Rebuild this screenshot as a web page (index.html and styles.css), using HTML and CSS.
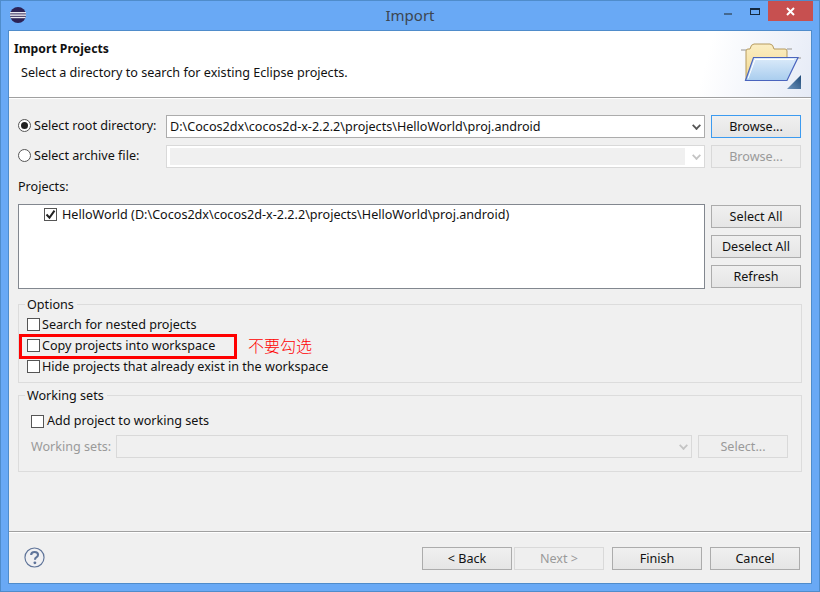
FILE: index.html
```html
<!DOCTYPE html>
<html lang="en">
<head>
  <meta charset="UTF-8">
  <title>Import</title>
  <link rel="stylesheet" href="styles.css">
</head>
<body>
<div class="window">
  <div class="titlebar">
    <svg class="appicon" width="16" height="16" viewBox="0 0 16 16">
      <circle cx="8" cy="8" r="8" fill="#2c2255"/>
      <rect x="0" y="5" width="16" height="1.4" fill="#e8e8f0"/>
      <rect x="0" y="7.4" width="16" height="1.4" fill="#f4f4f8"/>
      <rect x="0.4" y="9.8" width="15.2" height="1.4" fill="#e8e8f0"/>
    </svg>
    <div class="title">Import</div>
    <div class="winbtn minbtn"></div>
    <div class="winbtn maxbtn"></div>
    <div class="closebtn">
      <svg width="9" height="9" viewBox="0 0 9 9"><path d="M1 1l7 7M8 1l-7 7" stroke="#fff" stroke-width="2"/></svg>
    </div>
  </div>

  <div class="client">
    <div class="banner">
      <div class="banner-text">
        <div class="banner-title">Import Projects</div>
        <div class="banner-desc">Select a directory to search for existing Eclipse projects.</div>
      </div>
      <svg class="folder" width="62" height="50" viewBox="0 0 62 50">
        <defs>
          <linearGradient id="back" x1="0" y1="0" x2="0" y2="1"><stop offset="0" stop-color="#fbeec4"/><stop offset="1" stop-color="#f3d98f"/></linearGradient>
          <linearGradient id="front" x1="0" y1="0" x2="0" y2="1"><stop offset="0" stop-color="#dcebfa"/><stop offset="1" stop-color="#a9cdee"/></linearGradient>
          <linearGradient id="corner" x1="0" y1="1" x2="1" y2="0"><stop offset="0" stop-color="#6f95bd"/><stop offset="1" stop-color="#1f4a78"/></linearGradient>
        </defs>
        <path d="M1 8h5M47 7h5M12 16h3M55 16h6" stroke="#b5b5b5" stroke-width="1.5"/>
        <path d="M6 38V9q0-2 2-2h2q1-5 4-5h16q3 0 4 5h11q2 0 2 2v10H14z" fill="url(#back)" stroke="#b59a5e"/>
        <path d="M5.500 38.500L13.500 15.500H58L47 38.500z" fill="url(#front)" stroke="#4a64bd" stroke-width="1.2"/>
        <path d="M8 36.500L15 17.500h39" fill="none" stroke="#fff"/>
        <path d="M47 47l14-14v14z" fill="url(#corner)"/>
      </svg>
    </div>

    <div class="content">
      <div class="row">
        <label class="choice root-choice"><span class="radio on"></span>Select root directory:</label>
        <div class="combo"><span class="combo-text">D:\Cocos2dx\cocos2d-x-2.2.2\projects\HelloWorld\proj.android</span><span class="chev"></span></div>
        <button class="btn focus">Browse...</button>
      </div>
      <div class="row row-archive">
        <label class="choice root-choice"><span class="radio"></span>Select archive file:</label>
        <div class="combo off"><span class="combo-fill"></span><span class="chev"></span></div>
        <button class="btn off">Browse...</button>
      </div>

      <div class="projects-label">Projects:</div>
      <div class="projects">
        <div class="list">
          <div class="list-item"><span class="check on"><svg width="11" height="11" viewBox="0 0 11 11"><path d="M1.5 5.5l3 3.2 5-7" fill="none" stroke="#222" stroke-width="2"/></svg></span>HelloWorld (D:\Cocos2dx\cocos2d-x-2.2.2\projects\HelloWorld\proj.android)</div>
        </div>
        <div class="side-btns">
          <button class="btn">Select All</button>
          <button class="btn">Deselect All</button>
          <button class="btn">Refresh</button>
        </div>
      </div>

      <div class="group options">
        <div class="legend">Options</div>
        <label class="choice opt"><span class="check"></span>Search for nested projects</label>
        <label class="choice opt"><span class="check"></span>Copy projects into workspace</label>
        <label class="choice opt"><span class="check"></span>Hide projects that already exist in the workspace</label>
        <div class="redbox"></div>
        <div class="note">不要勾选</div>
      </div>

      <div class="group sets">
        <div class="legend">Working sets</div>
        <label class="choice add"><span class="check"></span>Add project to working sets</label>
        <div class="row sets-row">
          <span class="muted">Working sets:</span>
          <div class="combo off"><span class="chev"></span></div>
          <button class="btn off">Select...</button>
        </div>
      </div>
    </div>

    <div class="footer">
      <svg class="help" width="21" height="21" viewBox="0 0 22 22">
        <circle cx="11" cy="11" r="10" fill="#f0f0f2" stroke="#5f7499" stroke-width="1.2"/>
        <path d="M7.500 8.500q0-3.300 3.600-3.300 3.600 0 3.600 3 0 1.700-1.800 2.700-1.400.8-1.400 2.400" fill="none" stroke="#5f7499" stroke-width="2.200"/>
        <circle cx="11.400" cy="16.600" r="1.500" fill="#5f7499"/>
      </svg>
      <div class="footer-btns">
        <button class="btn">&lt; Back</button>
        <button class="btn off">Next &gt;</button>
        <button class="btn finish">Finish</button>
        <button class="btn cancel">Cancel</button>
      </div>
    </div>
  </div>
</div>
</body>
</html>
```

FILE: styles.css
```css
html, body {
  margin: 0;
  padding: 0;
}
body {
  width: 820px;
  height: 592px;
  overflow: hidden;
  font-family: "Noto Sans", "Noto Sans CJK SC", sans-serif;
  font-size: 12.6px;
  color: #111;
}
.window {
  box-sizing: border-box;
  width: 820px;
  height: 592px;
  background: #69a9f5;
  border: 1px solid #4f8ccb;
  padding: 0 7px 7px;
  display: flex;
  flex-direction: column;
}
.titlebar {
  height: 29px;
  flex: none;
  display: flex;
  align-items: flex-start;
  position: relative;
}
.appicon {
  margin: 6px 0 0 2px;
}
.title {
  position: absolute;
  left: 0;
  right: 0;
  top: 4px;
  text-align: center;
  font-size: 15px;
  line-height: 20px;
  color: #3c4650;
}
.winbtn {
  position: absolute;
  box-sizing: border-box;
}
.minbtn {
  right: 80px;
  top: 12px;
  width: 8px;
  height: 2px;
  background: #44688f;
}
.maxbtn {
  right: 52px;
  top: 7px;
  width: 10px;
  height: 7px;
  border: 1px solid #14293f;
  border-top-width: 2px;
}
.closebtn {
  position: absolute;
  right: -1px;
  top: 0;
  width: 45px;
  height: 20px;
  background: #c75050;
  display: flex;
  align-items: center;
  justify-content: center;
}
.client {
  flex: 1;
  background: #f0f0f0;
  border: 1px solid #4f8ccb;
  display: flex;
  flex-direction: column;
}
.banner {
  height: 66px;
  flex: none;
  background: linear-gradient(105deg, #fff 86%, #e6ebf6 100%);
  border-bottom: 1px solid #a0a0a0;
  box-shadow: 0 1px 0 #fff;
  display: flex;
  justify-content: space-between;
}
.banner-text {
  padding: 9px 0 0 5px;
}
.banner-title {
  font-weight: bold;
  font-size: 12.2px;
  line-height: 18px;
}
.banner-desc {
  margin: 6px 0 0 7px;
  line-height: 18px;
}
.folder {
  margin: 11px 9px 0 0;
}
.content {
  flex: 1;
  padding: 17px 10px 0 9px;
}
.row {
  display: flex;
  align-items: center;
}
.row-archive {
  margin-top: 7px;
}
.choice {
  display: flex;
  align-items: center;
  line-height: 18px;
}
.root-choice {
  width: 148px;
  flex: none;
  padding-bottom: 2px;
  box-sizing: border-box;
  white-space: nowrap;
}
.radio {
  box-sizing: border-box;
  width: 13px;
  height: 13px;
  border: 1px solid #555;
  border-radius: 50%;
  background: #fff;
  margin-right: 3px;
  flex: none;
  position: relative;
}
.radio.on::after {
  content: "";
  position: absolute;
  left: 2px;
  top: 2px;
  width: 7px;
  height: 7px;
  border-radius: 50%;
  background: #222;
}
.combo {
  box-sizing: border-box;
  flex: 1;
  height: 23px;
  background: #fff;
  border: 1px solid #acacac;
  display: flex;
  align-items: center;
  padding: 0 3px;
  position: relative;
  min-width: 0;
}
.combo-text {
  flex: 1;
  white-space: nowrap;
}
.combo.off {
  border-color: #d9d9d9;
  background: #f0f0f0;
}
.row-archive .combo {
  background: #fff;
}
.combo-fill {
  flex: 1;
  height: 17px;
  margin-right: 16px;
  background: #f0f0f0;
}
.chev {
  position: absolute;
  right: 4px;
  top: 6px;
  width: 5px;
  height: 5px;
  border-right: 2px solid #555;
  border-bottom: 2px solid #555;
  transform: rotate(45deg) scale(0.9);
}
.combo.off .chev {
  border-color: #c4c4c4;
}
.btn {
  box-sizing: border-box;
  width: 90px;
  height: 23px;
  flex: none;
  margin-left: 6px;
  padding: 0;
  font: inherit;
  color: #111;
  background: linear-gradient(#f0f0f0, #e5e5e5);
  border: 1px solid #acacac;
}
.btn.focus {
  border-color: #3c9bf0;
}
.btn.off {
  background: #efefef;
  border-color: #d9d9d9;
  color: #9a9a9a;
}
.projects-label {
  margin-top: 10px;
  line-height: 18px;
}
.projects {
  display: flex;
  margin-top: 8px;
}
.list {
  box-sizing: border-box;
  flex: 1;
  height: 85px;
  background: #fff;
  border: 1px solid #82878f;
  padding: 1px 0 0 25px;
}
.list-item {
  display: flex;
  align-items: center;
  line-height: 17px;
  white-space: nowrap;
}
.list-item .check {
  margin-right: 5px;
}
.check {
  box-sizing: border-box;
  width: 13px;
  height: 13px;
  border: 1px solid #555;
  background: #fff;
  margin-right: 2px;
  flex: none;
  display: flex;
  align-items: center;
  justify-content: center;
}
.add .check {
  margin-right: 3px;
}
.side-btns {
  display: flex;
  flex-direction: column;
  gap: 7px;
  padding-top: 1px;
}
.group {
  box-sizing: border-box;
  border: 1px solid #dcdcdc;
  margin-right: -1px;
  position: relative;
}
.legend {
  position: absolute;
  left: 6px;
  top: -9px;
  padding: 0 3px 0 2px;
  line-height: 18px;
  background: #f0f0f0;
}
.options {
  height: 79px;
  margin-top: 15px;
  padding: 9px 0 0 8px;
}
.opt {
  height: 21px;
}
.redbox {
  position: absolute;
  left: 0;
  top: 29px;
  width: 218px;
  height: 25px;
  box-sizing: border-box;
  border: 3px solid #f00;
}
.note {
  position: absolute;
  left: 229px;
  top: 29px;
  font-size: 16px;
  font-weight: 300;
  line-height: 22px;
  color: #f00;
  font-family: "Noto Sans CJK SC", sans-serif;
}
.sets {
  height: 77px;
  margin-top: 12px;
  padding: 16px 13px 0 12px;
}
.sets-row {
  margin-top: 5px;
}
.muted {
  color: #9a9a9a;
  width: 85px;
  flex: none;
  white-space: nowrap;
}
.footer {
  box-sizing: border-box;
  flex: none;
  height: 52px;
  border-top: 1px solid #a0a0a0;
  box-shadow: inset 0 1px 0 #fff;
  display: flex;
  align-items: flex-start;
  justify-content: space-between;
  padding: 15px 11px 0 15px;
}
.footer-btns {
  display: flex;
}
.footer-btns .btn {
  margin-left: 2px;
}
.footer-btns .finish,
.footer-btns .cancel {
  margin-left: 8px;
}
```
